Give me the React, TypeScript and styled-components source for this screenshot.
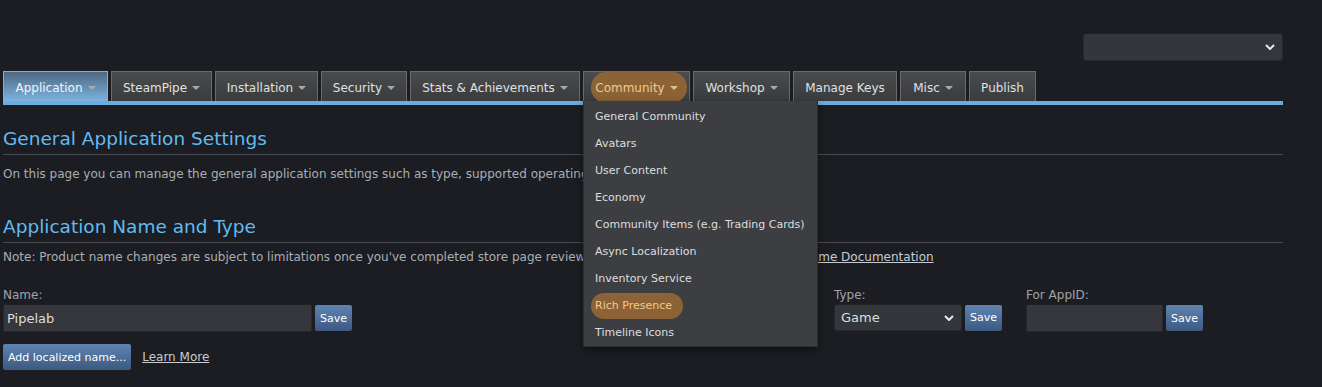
import React from "react";
import styled, { createGlobalStyle } from "styled-components";

const GlobalStyle = createGlobalStyle`
  body {
    margin: 0;
    background: #1b1d22;
    font-family: "DejaVu Sans", sans-serif;
  }
`;

const Page = styled.div`
  width: 1283px;
  height: 387px;
  padding: 33px 0 0 3px;
  box-sizing: border-box;
  color: #a9aeb3;
  overflow: hidden;
`;

const TopBar = styled.div`
  display: flex;
  justify-content: flex-end;
`;

const SelectBox = styled.div<{ $width: number; $height: number }>`
  width: ${(p) => p.$width}px;
  height: ${(p) => p.$height}px;
  box-sizing: border-box;
  display: flex;
  align-items: center;
  justify-content: space-between;
  padding: 0 7px 0 6px;
  background: #33373b;
  border: 1px solid #26282c;
  border-top-color: #202226;
  border-radius: 3px;
  color: #dcdedf;
  font-size: 13px;
`;

const TabRow = styled.div`
  display: flex;
  gap: 3px;
  height: 30px;
  margin-top: 10px;
  border-bottom: 4px solid #69ade0;
`;

const Tab = styled.div<{ $active?: boolean; $width: number }>`
  position: relative;
  width: ${(p) => p.$width}px;
  box-sizing: border-box;
  display: flex;
  align-items: center;
  justify-content: center;
  gap: 5px;
  padding-top: 2px;
  border: 1px solid ${(p) => (p.$active ? "#72b4e6" : "#6a6a6b")};
  border-bottom: none;
  background: ${(p) =>
    p.$active
      ? "linear-gradient(to bottom, #4d6884, #7cb3df)"
      : "linear-gradient(to bottom, #4a4b4d, #3a3b3d)"};
  color: ${(p) => (p.$active ? "#f2f4f6" : "#dfe1e3")};
  font-size: 12px;
  white-space: nowrap;
`;

const TabPill = styled.span`
  display: flex;
  align-items: center;
  gap: 5px;
  align-self: stretch;
  margin: -2px -9px -2px -4px;
  padding: 2px 9px 1px 4px;
  border-radius: 15px;
  background: #8c6336;
  color: #f1c98e;
  position: relative;
  z-index: 1;
`;

const Menu = styled.div`
  position: absolute;
  top: 100%;
  left: -1px;
  z-index: 10;
  width: 235px;
  padding: 2px 0 0;
  box-sizing: border-box;
  background: #3d3e42;
  border: 1px solid #2c2d31;
  border-top: none;
  box-shadow: 0 3px 8px rgba(0, 0, 0, 0.45);
`;

const MenuItem = styled.div`
  height: 27px;
  display: flex;
  align-items: center;
  padding-left: 11px;
  font-size: 11px;
  color: #dcdedf;
`;

const MenuPill = styled.span`
  display: inline-flex;
  align-items: center;
  height: 26px;
  margin-left: -4px;
  padding: 0 11px 0 4px;
  border-radius: 13px;
  background: #8c6336;
  color: #f1c98e;
`;

const Heading = styled.h2<{ $gap: number }>`
  margin: ${(p) => p.$gap}px 0 0;
  padding-bottom: 4px;
  border-bottom: 1px solid #484b51;
  font-size: 18.5px;
  font-weight: normal;
  line-height: 22px;
  color: #62bbf0;
`;

const Text = styled.p`
  margin: 10px 0 0;
  font-size: 12px;
  line-height: 18px;
  white-space: nowrap;
`;

const NoteText = styled(Text)`
  margin-top: 5px;
`;

const TextLink = styled.a`
  color: #c6ccd1;
  text-decoration: underline;
  font-size: 12px;
`;

const FieldGrid = styled.div`
  display: grid;
  grid-template-columns: 831px 192px 1fr;
  margin-top: 20px;
`;

const Field = styled.div`
  display: flex;
  flex-direction: column;
`;

const Label = styled.label`
  font-size: 12px;
  line-height: 18px;
  color: #9fa4a9;
`;

const ControlRow = styled.div`
  display: flex;
  align-items: center;
  gap: 3px;
`;

const TextInput = styled.div<{ $width: number }>`
  width: ${(p) => p.$width}px;
  height: 28px;
  box-sizing: border-box;
  display: flex;
  align-items: center;
  padding-left: 3px;
  background: #36373c;
  border: 1px solid #27282c;
  border-top-color: #1e1f23;
  border-radius: 2px;
  color: #dcdedf;
  font-size: 13px;
`;

const Button = styled.button`
  height: 26px;
  padding: 0 5px;
  border: none;
  border-radius: 2px;
  background: linear-gradient(to bottom, #5f84b3, #3c5980);
  color: #ffffff;
  font-family: "DejaVu Sans", sans-serif;
  font-size: 11px;
  white-space: nowrap;
`;

const AddRow = styled.div`
  display: flex;
  align-items: center;
  gap: 11px;
  margin-top: 12px;
`;

const Caret = ({ color = "#a9a9a9" }: { color?: string }) => (
  <svg width="8" height="4" viewBox="0 0 8 4">
    <path d="M0 0h8L4 4z" fill={color} />
  </svg>
);

const Chevron = () => (
  <svg width="10" height="6" viewBox="0 0 10 6">
    <path d="M1 1l4 4 4-4" fill="none" stroke="#e8e8e8" strokeWidth="2" />
  </svg>
);

const tabs: { name: string; width: number; menu?: boolean }[] = [
  { name: "Application", width: 105, menu: true },
  { name: "SteamPipe", width: 101, menu: true },
  { name: "Installation", width: 103, menu: true },
  { name: "Security", width: 86, menu: true },
  { name: "Stats & Achievements", width: 170, menu: true },
  { name: "Community", width: 107, menu: true },
  { name: "Workshop", width: 97, menu: true },
  { name: "Manage Keys", width: 104 },
  { name: "Misc", width: 66, menu: true },
  { name: "Publish", width: 67 },
];

const communityItems = [
  "General Community",
  "Avatars",
  "User Content",
  "Economy",
  "Community Items (e.g. Trading Cards)",
  "Async Localization",
  "Inventory Service",
  "Rich Presence",
  "Timeline Icons",
];

const App: React.FC = () => {
  return (
    <>
      <GlobalStyle />
      <Page>
        <TopBar>
          <SelectBox $width={200} $height={28}>
            <span />
            <Chevron />
          </SelectBox>
        </TopBar>

        <TabRow>
          {tabs.map((tab) =>
            tab.name === "Community" ? (
              <Tab key={tab.name} $width={tab.width}>
                <TabPill>
                  {tab.name}
                  <Caret color="#e7bf8a" />
                </TabPill>
                <Menu>
                  {communityItems.map((item) => (
                    <MenuItem key={item}>
                      {item === "Rich Presence" ? <MenuPill>{item}</MenuPill> : item}
                    </MenuItem>
                  ))}
                </Menu>
              </Tab>
            ) : (
              <Tab key={tab.name} $width={tab.width} $active={tab.name === "Application"}>
                {tab.name}
                {tab.menu && <Caret />}
              </Tab>
            )
          )}
        </TabRow>

        <Heading $gap={23}>General Application Settings</Heading>
        <Text>
          On this page you can manage the general application settings such as type, supported
          operating systems, and release state.
        </Text>

        <Heading $gap={33}>Application Name and Type</Heading>
        <NoteText>
          Note: Product name changes are subject to limitations once you've completed store page
          review. For more information, see the <TextLink>App Name Documentation</TextLink>
        </NoteText>

        <FieldGrid>
          <Field>
            <Label>Name:</Label>
            <ControlRow>
              <TextInput $width={309}>Pipelab</TextInput>
              <Button>Save</Button>
            </ControlRow>
          </Field>
          <Field>
            <Label>Type:</Label>
            <ControlRow>
              <SelectBox $width={128} $height={27}>
                Game
                <Chevron />
              </SelectBox>
              <Button>Save</Button>
            </ControlRow>
          </Field>
          <Field>
            <Label>For AppID:</Label>
            <ControlRow>
              <TextInput $width={137} />
              <Button>Save</Button>
            </ControlRow>
          </Field>
        </FieldGrid>

        <AddRow>
          <Button>Add localized name...</Button>
          <TextLink>Learn More</TextLink>
        </AddRow>
      </Page>
    </>
  );
};

export default App;
